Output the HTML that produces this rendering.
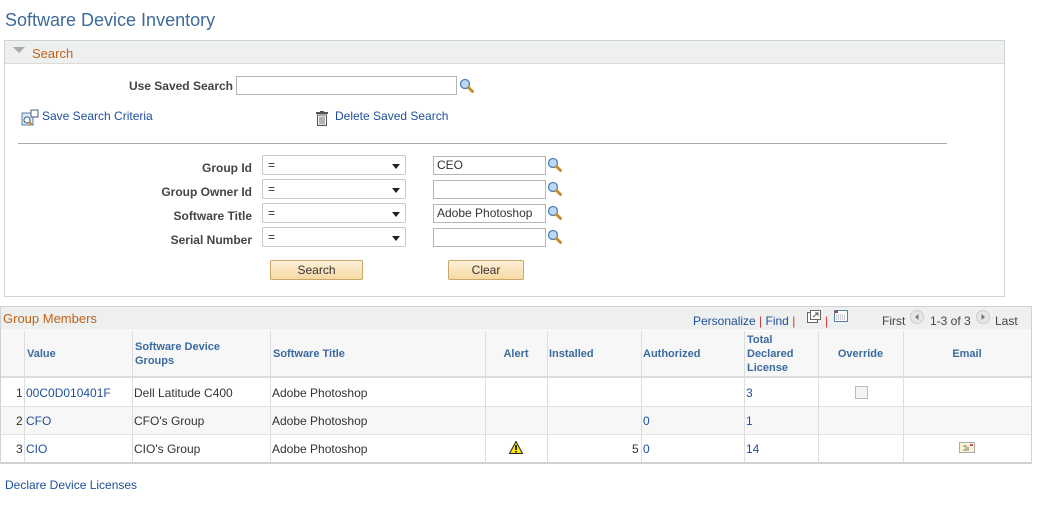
<!DOCTYPE html>
<html><head><meta charset="utf-8"><style>
*{margin:0;padding:0;box-sizing:border-box}
body{width:1042px;height:507px;background:#fff;font-family:"Liberation Sans",Arial,sans-serif;font-size:12px;color:#333;position:relative;overflow:hidden}
.a{position:absolute;white-space:nowrap}
.lnk{color:#1f4e9c}
.lbl{font-weight:bold;color:#444;text-align:right}
.inp{position:absolute;border:1px solid #b5b5b5;background:#fff;height:19px;padding:1px 3px;font-size:12px;line-height:15px}
.sel{position:absolute;border:1px solid #c8c8c8;border-radius:2px;background:#fff;height:20px;padding:3px 5px;line-height:13px}
.sel:after{content:"";position:absolute;right:5px;top:8px;border-left:4px solid transparent;border-right:4px solid transparent;border-top:5px solid #222}
.mag{position:absolute;width:15px;height:15px}
.btn{position:absolute;height:20px;border:1px solid #c9a86a;background:linear-gradient(#fdf0d8,#f7d9a4);text-align:center;line-height:18px;color:#333;border-radius:2px}
.th{position:absolute;color:#3b6aa0;font-weight:bold;font-size:11px;line-height:14px}
.vl{position:absolute;width:1px;background:#ddd}
</style></head><body>
<svg width="0" height="0" style="position:absolute"><defs><symbol id="m" viewBox="0 0 15 15"><circle cx="6" cy="6" r="4.5" fill="#bcd7f2" stroke="#4a7fb8" stroke-width="1.3"/><path d="M9.5 9.5 L13.5 13.5" stroke="#c98a2a" stroke-width="3" stroke-linecap="round"/></symbol></defs></svg>

<div class="a" style="left:5px;top:10px;font-size:18px;color:#3d6a99">Software Device Inventory</div>

<div class="a" style="left:4px;top:40px;width:1001px;height:257px;border:1px solid #cfd2d4"></div>
<div class="a" style="left:5px;top:41px;width:999px;height:23px;background:#eef0f0;border-bottom:1px solid #dadcdc"></div>
<div class="a" style="left:13px;top:47px;border-left:6px solid transparent;border-right:6px solid transparent;border-top:6px solid #aaa"></div>
<div class="a" style="left:32px;top:46px;font-size:13px;color:#c0611a">Search</div>

<div class="a lbl" style="left:100px;top:79px;width:133px">Use Saved Search</div>
<div class="inp" style="left:236px;top:76px;width:221px"></div>
<svg class="mag" style="left:459px;top:78px"><use href="#m"/></svg>

<svg class="a" style="left:21px;top:109px" width="18" height="18" viewBox="0 0 18 18"><rect x="1" y="4" width="11" height="12" fill="#dce7f3" stroke="#5a7ea8"/><rect x="10" y="1" width="7" height="7" fill="#fff" stroke="#3a5f8a"/><circle cx="6" cy="11" r="3" fill="#fff" stroke="#3a5f8a"/><path d="M8 13 L11 16" stroke="#c98a2a" stroke-width="2"/></svg>
<div class="a lnk" style="left:42px;top:109px">Save Search Criteria</div>
<svg class="a" style="left:316px;top:111px" width="12" height="15" viewBox="0 0 12 15"><rect x="0" y="1" width="12" height="2" fill="#555"/><rect x="4" y="0" width="4" height="2" fill="#555"/><rect x="1.5" y="4" width="9" height="10.5" fill="#fff" stroke="#555"/><path d="M4 5.5v8M6 5.5v8M8 5.5v8" stroke="#666"/></svg>
<div class="a lnk" style="left:335px;top:109px">Delete Saved Search</div>

<div class="a" style="left:18px;top:143px;width:929px;height:1px;background:#aaa"></div>

<div class="a lbl" style="left:100px;top:161px;width:152px">Group Id</div>
<div class="sel" style="left:262px;top:155px;width:144px">=</div>
<div class="inp" style="left:433px;top:156px;width:113px">CEO</div>
<svg class="mag" style="left:547px;top:157px"><use href="#m"/></svg>

<div class="a lbl" style="left:100px;top:185px;width:152px">Group Owner Id</div>
<div class="sel" style="left:262px;top:179px;width:144px">=</div>
<div class="inp" style="left:433px;top:180px;width:113px"></div>
<svg class="mag" style="left:547px;top:181px"><use href="#m"/></svg>

<div class="a lbl" style="left:100px;top:209px;width:152px">Software Title</div>
<div class="sel" style="left:262px;top:203px;width:144px">=</div>
<div class="inp" style="left:433px;top:204px;width:113px">Adobe Photoshop</div>
<svg class="mag" style="left:547px;top:205px"><use href="#m"/></svg>

<div class="a lbl" style="left:100px;top:233px;width:152px">Serial Number</div>
<div class="sel" style="left:262px;top:227px;width:144px">=</div>
<div class="inp" style="left:433px;top:228px;width:113px"></div>
<svg class="mag" style="left:547px;top:229px"><use href="#m"/></svg>

<div class="btn" style="left:270px;top:260px;width:93px">Search</div>
<div class="btn" style="left:448px;top:260px;width:76px">Clear</div>

<div class="a" style="left:0;top:306px;width:1032px;height:158px;border:1px solid #d0d2d3;border-bottom:2px solid #cfd1d2"></div>
<div class="a" style="left:1px;top:307px;width:1030px;height:23px;background:#eef0f0"></div>
<div class="a" style="left:3px;top:311px;font-size:13px;color:#c0611a">Group Members</div>
<div class="a" style="left:693px;top:314px;font-size:12px;color:#1f4e9c">Personalize <span style="color:#c33">|</span> Find <span style="color:#c33">|</span></div>
<svg class="a" style="left:807px;top:310px" width="14" height="13"><rect x="0.5" y="2.5" width="10" height="10" fill="#fff" stroke="#666"/><rect x="3.5" y="0.5" width="10" height="9" fill="#fff" stroke="#666"/><path d="M6 7l5-4M8 3h3v3" stroke="#555" fill="none"/></svg>
<div class="a" style="left:825px;top:314px;color:#c33">|</div>
<svg class="a" style="left:834px;top:310px" width="14" height="12"><rect x="0.5" y="0.5" width="13" height="11" fill="#fff" stroke="#5a7ea8"/><rect x="1" y="1" width="3" height="2" fill="#d22"/><path d="M2 5h10M2 7h10M2 9h10" stroke="#99a" stroke-dasharray="1 1"/></svg>
<div class="a" style="left:882px;top:314px;color:#444">First</div>
<svg class="a" style="left:910px;top:310px" width="14" height="14"><circle cx="7" cy="7" r="6.5" fill="#e6e6e6" stroke="#ccc"/><path d="M8.5 4v6L5 7z" fill="#777"/></svg>
<div class="a" style="left:930px;top:314px;color:#444">1-3 of 3</div>
<svg class="a" style="left:976px;top:310px" width="14" height="14"><circle cx="7" cy="7" r="6.5" fill="#e6e6e6" stroke="#ccc"/><path d="M5.5 4v6L9 7z" fill="#777"/></svg>
<div class="a" style="left:995px;top:314px;color:#444">Last</div>

<div class="a" style="left:1px;top:331px;width:1030px;height:47px;background:#f7f7f7;border-bottom:2px solid #dcdcdc"></div>
<div class="a" style="left:1px;top:406px;width:1030px;height:28px;background:#f7f7f7"></div>
<div class="a" style="left:1px;top:406px;width:1030px;height:1px;background:#e2e2e2"></div>
<div class="a" style="left:1px;top:434px;width:1030px;height:1px;background:#e2e2e2"></div>
<div class="vl" style="left:24px;top:331px;height:132px"></div>
<div class="vl" style="left:132px;top:331px;height:132px"></div>
<div class="vl" style="left:270px;top:331px;height:132px"></div>
<div class="vl" style="left:485px;top:331px;height:132px"></div>
<div class="vl" style="left:547px;top:331px;height:132px"></div>
<div class="vl" style="left:641px;top:331px;height:132px"></div>
<div class="vl" style="left:744px;top:331px;height:132px"></div>
<div class="vl" style="left:818px;top:331px;height:132px"></div>
<div class="vl" style="left:903px;top:331px;height:132px"></div>

<div class="th" style="left:27px;top:347px">Value</div>
<div class="th" style="left:135px;top:340px">Software Device<br>Groups</div>
<div class="th" style="left:273px;top:347px">Software Title</div>
<div class="th" style="left:485px;top:347px;width:62px;text-align:center">Alert</div>
<div class="th" style="left:549px;top:347px">Installed</div>
<div class="th" style="left:643px;top:347px">Authorized</div>
<div class="th" style="left:747px;top:333px">Total<br>Declared<br>License</div>
<div class="th" style="left:818px;top:347px;width:85px;text-align:center">Override</div>
<div class="th" style="left:903px;top:347px;width:128px;text-align:center">Email</div>

<div class="a" style="left:16px;top:386px">1</div>
<div class="a lnk" style="left:26px;top:386px">00C0D010401F</div>
<div class="a" style="left:134px;top:386px">Dell Latitude C400</div>
<div class="a" style="left:272px;top:386px">Adobe Photoshop</div>
<div class="a lnk" style="left:746px;top:386px">3</div>
<div class="a" style="left:855px;top:386px;width:13px;height:13px;border:1px solid #bbb;background:#f4f4f4"></div>

<div class="a" style="left:16px;top:414px">2</div>
<div class="a lnk" style="left:26px;top:414px">CFO</div>
<div class="a" style="left:134px;top:414px">CFO's Group</div>
<div class="a" style="left:272px;top:414px">Adobe Photoshop</div>
<div class="a lnk" style="left:643px;top:414px">0</div>
<div class="a lnk" style="left:746px;top:414px">1</div>

<div class="a" style="left:16px;top:442px">3</div>
<div class="a lnk" style="left:26px;top:442px">CIO</div>
<div class="a" style="left:134px;top:442px">CIO's Group</div>
<div class="a" style="left:272px;top:442px">Adobe Photoshop</div>
<svg class="a" style="left:509px;top:441px" width="14" height="13"><path d="M7 0.5L13.5 12.5H0.5z" fill="#ffe600" stroke="#222"/><path d="M7 4v5" stroke="#000" stroke-width="1.6"/><rect x="6.2" y="10" width="1.6" height="1.5" fill="#000"/></svg>
<div class="a" style="left:632px;top:442px">5</div>
<div class="a lnk" style="left:643px;top:442px">0</div>
<div class="a lnk" style="left:746px;top:442px">14</div>
<svg class="a" style="left:959px;top:442px" width="16" height="11"><rect x="0.5" y="0.5" width="15" height="10" fill="#fbf4d2" stroke="#aaa"/><path d="M4 4h4M6 6h4M4 8h6" stroke="#777"/><rect x="11" y="2" width="3" height="2" fill="#c55"/></svg>

<div class="a lnk" style="left:5px;top:478px">Declare Device Licenses</div>
</body></html>
